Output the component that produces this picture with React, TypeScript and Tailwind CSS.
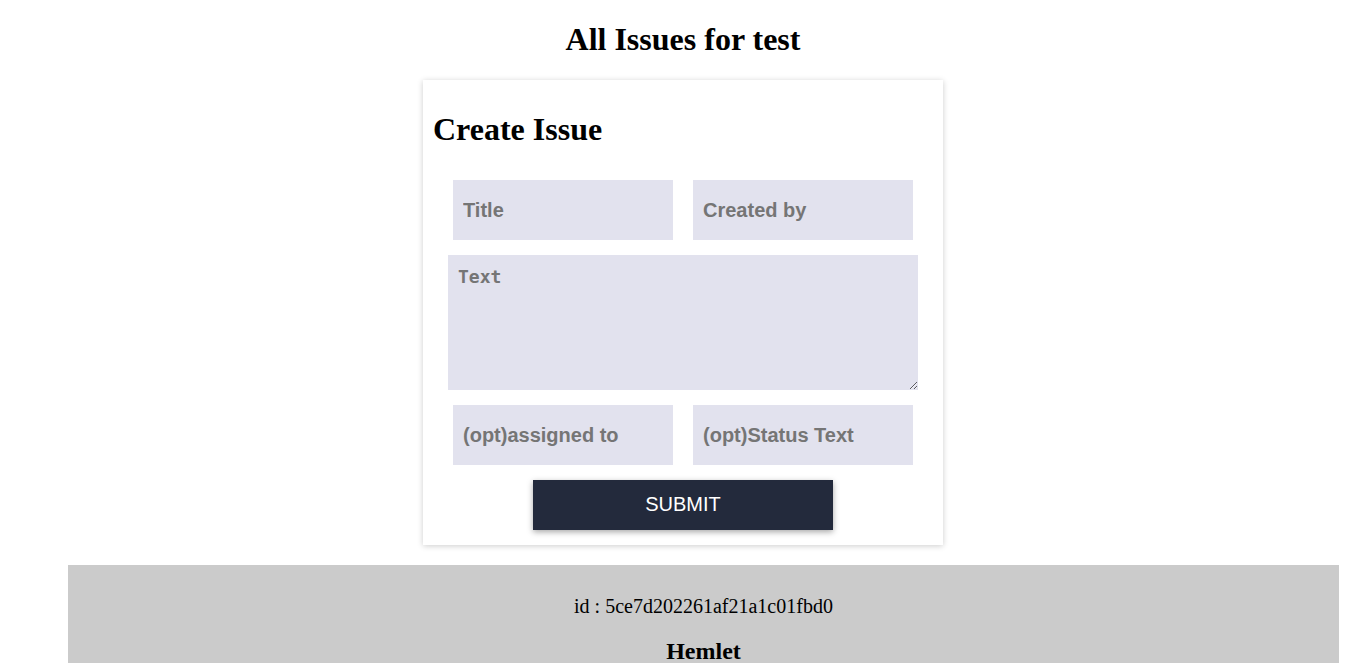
const serif = { fontFamily: '"Liberation Serif", "Times New Roman", serif' }

const FIELD =
  'h-[60px] w-[220px] bg-[#e2e2ee] px-[10px] text-[20px] font-bold text-black outline-none placeholder:text-[#757575]'

function CreateIssueCard() {
  return (
    <div className="mx-auto w-[520px] bg-white px-[10px] pt-[10px] pb-[15px] shadow-[0_1px_6px_rgba(0,0,0,0.2)]">
      <h2 className="my-[21px] text-[32px] font-bold leading-[37px]" style={serif}>
        Create Issue
      </h2>
      <form className="mt-[32px] flex flex-col items-center" onSubmit={(e) => e.preventDefault()}>
        <div className="flex justify-center gap-5" style={{ fontFamily: '"Liberation Sans", Arial, sans-serif' }}>
          <input className={FIELD} placeholder="Title" />
          <input className={FIELD} placeholder="Created by" />
        </div>
        <textarea
          className="mt-[15px] block h-[135px] w-[470px] resize bg-[#e2e2ee] px-[10px] py-[8px] text-[18px] font-bold outline-none placeholder:text-[#757575]"
          style={{ fontFamily: '"DejaVu Sans Mono", "Liberation Mono", monospace' }}
          placeholder="Text"
        />
        <div className="mt-[15px] flex justify-center gap-5" style={{ fontFamily: '"Liberation Sans", Arial, sans-serif' }}>
          <input className={FIELD} placeholder="(opt)assigned to" />
          <input className={FIELD} placeholder="(opt)Status Text" />
        </div>
        <button
          type="submit"
          className="mt-[15px] h-[50px] w-[300px] bg-[#232a3c] pb-[2px] text-[20px] text-white shadow-[0_2px_6px_rgba(0,0,0,0.35)]"
          style={{ fontFamily: '"Liberation Sans", Arial, sans-serif' }}
        >
          SUBMIT
        </button>
      </form>
    </div>
  )
}

function IssueItem() {
  return (
    <div className="mt-[20px] ml-[5%] w-[93%] bg-[#cbcbcb] pt-[10px] pb-[20px] text-center" style={serif}>
      <p className="mt-[20px] text-[20px] leading-[23px]">id : 5ce7d202261af21a1c01fbd0</p>
      <h3 className="mt-[19px] text-[24px] font-bold leading-[28px]">Hemlet</h3>
    </div>
  )
}

export default function App() {
  return (
    <div className="min-h-screen bg-white text-black" style={serif}>
      <h1 className="mt-[21px] mb-[22px] text-center text-[32px] font-bold leading-[37px]">All Issues for test</h1>
      <CreateIssueCard />
      <IssueItem />
    </div>
  )
}
